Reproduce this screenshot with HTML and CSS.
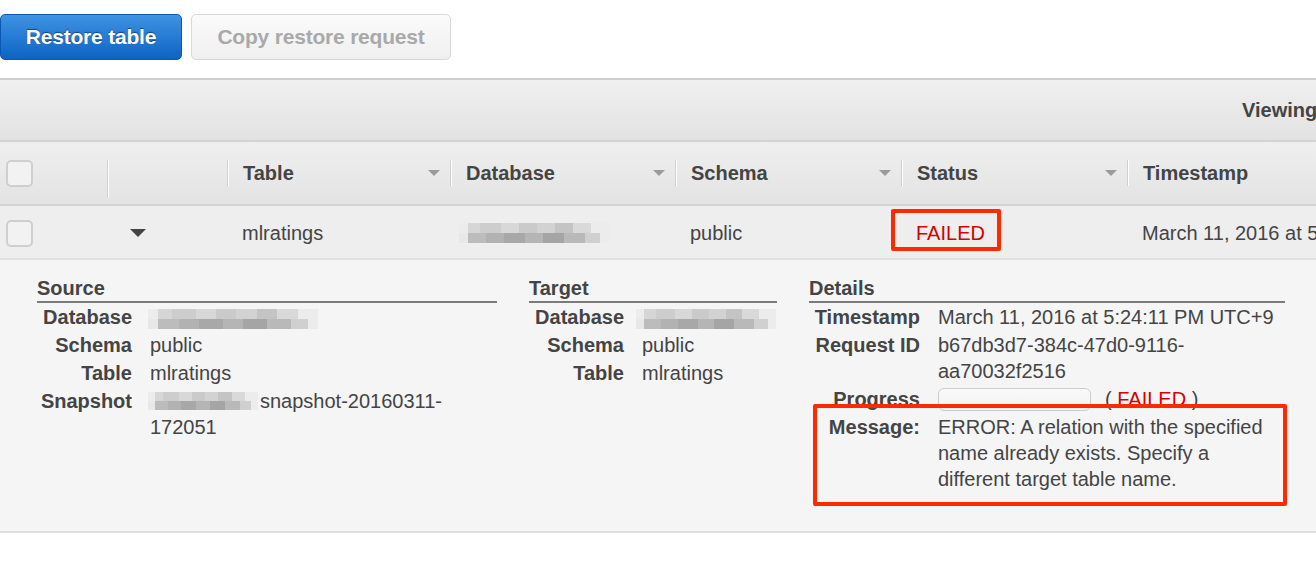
FILE: index.html
```html
<!DOCTYPE html>
<html>
<head>
<meta charset="utf-8">
<link rel="stylesheet" href="styles.css">
</head>
<body>
<div class="page">
  <div class="actions">
    <button class="btn btn-primary">Restore table</button>
    <button class="btn btn-disabled">Copy restore request</button>
  </div>

  <div class="toolbar"><span class="viewing">Viewing 1 to 1 of 1 Requests</span></div>

  <div class="grid head">
    <div class="hcell"><span class="check"></span></div>
    <div class="hcell"><span class="sep tall"></span></div>
    <div class="hcell"><span class="sep"></span><span class="hlabel">Table</span><span class="sort"></span></div>
    <div class="hcell"><span class="sep"></span><span class="hlabel">Database</span><span class="sort"></span></div>
    <div class="hcell"><span class="sep"></span><span class="hlabel">Schema</span><span class="sort"></span></div>
    <div class="hcell"><span class="sep"></span><span class="hlabel">Status</span><span class="sort"></span></div>
    <div class="hcell"><span class="sep"></span><span class="hlabel">Timestamp</span></div>
  </div>

  <div class="grid row">
    <div class="cell"><span class="check"></span></div>
    <div class="cell expander"><span class="caret"></span></div>
    <div class="cell">mlratings</div>
    <div class="cell"><span class="blur blur-row"></span></div>
    <div class="cell">public</div>
    <div class="cell status"><span class="failed">FAILED</span><span class="mark mark-status"></span></div>
    <div class="cell nowrap">March 11, 2016 at 5:24:11 PM UTC+9</div>
  </div>

  <div class="detail">
    <section class="panel panel-source">
      <h3>Source</h3>
      <dl class="kv">
        <dt>Database</dt><dd><span class="blur blur-src"></span></dd>
        <dt>Schema</dt><dd>public</dd>
        <dt>Table</dt><dd>mlratings</dd>
        <dt>Snapshot</dt><dd><span class="blur blur-snap"></span>snapshot-20160311-172051</dd>
      </dl>
    </section>
    <section class="panel panel-target">
      <h3>Target</h3>
      <dl class="kv">
        <dt>Database</dt><dd><span class="blur blur-tgt"></span></dd>
        <dt>Schema</dt><dd>public</dd>
        <dt>Table</dt><dd>mlratings</dd>
      </dl>
    </section>
    <section class="panel panel-details">
      <h3>Details</h3>
      <dl class="kv kv-details">
        <dt>Timestamp</dt><dd>March 11, 2016 at 5:24:11 PM UTC+9</dd>
        <dt>Request ID</dt><dd>b67db3d7-384c-47d0-9116-aa70032f2516</dd>
        <dt>Progress</dt><dd class="progress-line"><span class="progress"></span><span class="paren">( <span class="red">FAILED</span> )</span></dd>
        <dt class="msg-label">Message:</dt><dd class="msg">ERROR: A relation with the specified name already exists. Specify a different target table name.<span class="mark mark-msg"></span></dd>
      </dl>
    </section>
  </div>
</div>
</body>
</html>
```

FILE: styles.css
```css
* { box-sizing: border-box; }
html, body { margin: 0; padding: 0; background: #fff; }
body {
  font-family: "Liberation Sans", Arial, sans-serif;
  font-size: 20px;
  color: #444;
  overflow: hidden;
}
.page { width: 1316px; height: 570px; overflow: hidden; }

.actions {
  display: flex;
  gap: 9px;
  padding-top: 14px;
  height: 78px;
}
.btn {
  font-family: "Liberation Sans", Arial, sans-serif;
  font-size: 20px;
  font-weight: bold;
  height: 46px;
  border-radius: 5px;
  padding: 0;
  cursor: default;
}
.btn-primary {
  width: 182px;
  color: #fff;
  font-size: 21px;
  letter-spacing: -0.2px;
  background: linear-gradient(#3f93e3, #0d63c3);
  border: 1px solid #0a58b4;
  text-shadow: 0 -1px 1px rgba(0,0,0,0.45);
}
.btn-disabled {
  width: 260px;
  color: #a9a9a9;
  font-size: 21px;
  letter-spacing: -0.2px;
  background: linear-gradient(#fbfbfb, #efefef);
  border: 1px solid #d9d9d9;
}

.toolbar {
  height: 64px;
  border-top: 2px solid #cfcfcf;
  border-bottom: 2px solid #d2d2d2;
  background: linear-gradient(#f0f0f0, #e2e2e2);
  display: flex;
  align-items: center;
  padding-left: 1242px;
  white-space: nowrap;
  overflow: hidden;
}
.viewing { font-weight: bold; color: #444; }

.grid {
  display: grid;
  grid-template-columns: 107px 120px 223px 225px 226px 226px 320px;
  width: 1447px;
}
.head {
  height: 64px;
  background: linear-gradient(#efefef, #e3e3e3);
  border-bottom: 2px solid #d4d4d4;
}
.hcell {
  display: flex;
  align-items: flex-start;
  padding-top: 18px;
  font-weight: bold;
  line-height: 26px;
}
.hcell:first-child { padding-left: 6px; }
.sep {
  display: block;
  width: 2px;
  height: 26px;
  border-left: 1px solid #cfcfcf;
  border-right: 1px solid #fff;
}
.sep.tall { height: 38px; }
.hlabel { margin-left: 14px; }
.sort {
  margin-left: auto;
  margin-right: 10px;
  margin-top: 10px;
  width: 0; height: 0;
  border-left: 6px solid transparent;
  border-right: 6px solid transparent;
  border-top: 6px solid #9b9b9b;
}
.check {
  display: block;
  width: 27px;
  height: 27px;
  border: 2px solid #cfcfcf;
  border-radius: 5px;
  background: #f2f2f2;
}

.row {
  height: 54px;
  padding-top: 2px;
  background: #eeeeee;
  border-bottom: 2px solid #e0e0e0;
}
.cell {
  display: flex;
  align-items: center;
  padding-left: 15px;
  line-height: 26px;
}
.cell:first-child { padding-left: 6px; }
.expander { padding-left: 23px; }
.caret {
  width: 0; height: 0;
  border-left: 8px solid transparent;
  border-right: 8px solid transparent;
  border-top: 8px solid #444;
  margin-top: 0;
}
.nowrap { white-space: nowrap; }
.status { position: relative; padding-left: 15px; }
.failed { color: #d40000; }
.red { color: #d40000; }
.mark {
  position: absolute;
  border: 4px solid #ff2a00;
  border-radius: 2px;
  pointer-events: none;
}
.mark-status { left: -10px; top: 1px; width: 110px; height: 42px; }

.blur {
  display: inline-block;
  vertical-align: middle;
  height: 20px;
  background:
    linear-gradient(90deg, #ececec 0 6%, #d6d6d6 6% 14%, #cdcdcd 14% 28%, #d8d8d8 28% 40%, #cacaca 40% 52%, #d2d2d2 52% 64%, #c4c4c4 64% 76%, #d9d9d9 76% 88%, #ececec 88% 100%) top / 100% 50% no-repeat,
    linear-gradient(90deg, #e8e8e8 0 6%, #bcbcbc 6% 18%, #b2b2b2 18% 30%, #a8a8a8 30% 44%, #b5b5b5 44% 56%, #a5a5a5 56% 70%, #b9b9b9 70% 84%, #d0d0d0 84% 94%, #ececec 94% 100%) bottom / 100% 50% no-repeat;
  filter: blur(0.6px);
}
.blur-row { width: 150px; margin-left: -6px; }
.blur-src { width: 170px; margin-left: -2px; }
.blur-tgt { width: 140px; margin-left: -6px; }
.blur-snap { width: 110px; margin-left: -2px; margin-right: 2px; height: 18px; margin-top: -3px; }

.detail {
  display: flex;
  gap: 32px;
  padding: 15px 0 38px 37px;
  background: #f5f5f5;
  border-bottom: 2px solid #e0e0e0;
}
.panel h3 {
  margin: 0;
  font-size: 20px;
  line-height: 26px;
  font-weight: bold;
  color: #444;
  border-bottom: 2px solid #7b7b7b;
}
.panel-source { width: 460px; }
.panel-target { width: 248px; }
.panel-details { width: 476px; }

.kv {
  display: grid;
  grid-template-columns: 95px 1fr;
  column-gap: 18px;
  margin: 0;
  line-height: 26px;
}
.kv dt, .kv dd {
  margin: 0;
  padding: 1px 0;
}
.kv dt { font-weight: bold; text-align: right; }
.kv-details { grid-template-columns: 111px 1fr; }

.progress-line { display: flex; align-items: center; }
.progress {
  display: block;
  width: 153px;
  height: 23px;
  border: 1px solid #cdcdcd;
  border-radius: 6px;
  background: linear-gradient(#fafafa, #f2f2f2);
  margin-top: 1px;
}
.paren { margin-left: 14px; }
.msg { position: relative; }
.mark-msg { left: -125px; right: -2px; top: -9px; bottom: -13px; }
```
